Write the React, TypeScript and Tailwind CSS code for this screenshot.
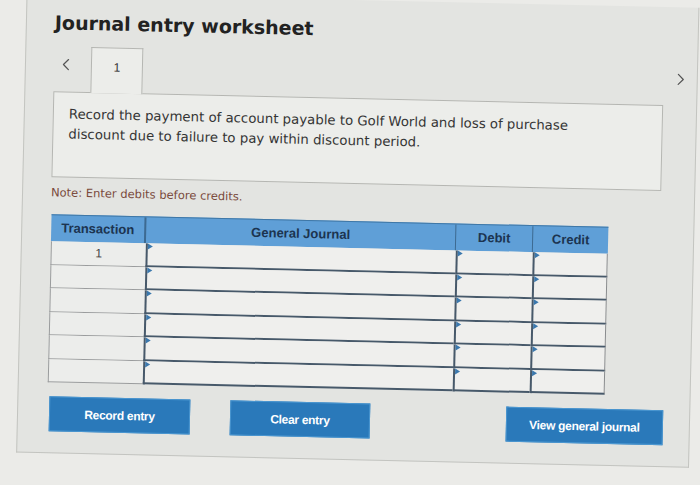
import { ChevronLeft, ChevronRight } from "lucide-react";

const rows = [0, 1, 2, 3, 4, 5];

function Marker() {
    return (
        <span className="absolute left-0 top-0 w-0 h-0 border-y-[3px] border-y-transparent border-l-[5px] border-l-[#3b78ad]" />
    );
}

export default function App() {
    return (
        <div className="w-[700px] h-[485px] overflow-hidden bg-[#ebebe8]">
            {/* photo is slightly tilted */}
            <div className="w-[700px] h-[485px] rotate-[1.3deg]">
                <div className="ml-[21px] w-[673px] h-[460px] border-x border-b border-[#c3c4c0] bg-[#e3e4e1] pl-[28px] pr-[6px] flex flex-col">
                    {/* Title */}
                    <h1 className="mt-[17px] text-[19px] leading-[24px] font-bold text-[#222] font-['DejaVu_Sans',sans-serif]">
                        Journal entry worksheet
                    </h1>

                    {/* Tabs row */}
                    <div className="mt-[12px] flex items-start h-[45px]">
                        <div className="w-[37px] pt-[8px] pl-[2px]">
                            <ChevronLeft className="w-5 h-5 text-[#555]" strokeWidth={1.5} />
                        </div>
                        <div className="relative z-10 w-[52px] h-[46px] border border-b-0 border-[#b5b6b2] bg-[#ecedea] flex justify-center pt-[11px] text-[12px] leading-[16px] text-[#333] font-['Liberation_Sans',sans-serif]">
                            1
                        </div>
                        <div className="flex-1" />
                        <div className="pt-[9px]">
                            <ChevronRight className="w-5 h-5 text-[#555]" strokeWidth={1.5} />
                        </div>
                    </div>

                    {/* Question box */}
                    <div className="w-[610px] h-[86px] border border-[#b5b6b2] bg-[#ecedea] pl-[15px] pr-[40px] pt-[12px] text-[13.3px] leading-[20px] text-[#353535] font-['DejaVu_Sans',sans-serif]">
                        Record the payment of account payable to Golf World and loss of purchase discount due to failure to pay within discount period.
                    </div>

                    <p className="mt-[8px] text-[11.5px] leading-[14px] text-[#7a4a3c] font-['DejaVu_Sans',sans-serif]">
                        Note: Enter debits before credits.
                    </p>

                    {/* Journal table */}
                    <div className="mt-[15px] w-[557px] ml-[1px] font-['Liberation_Sans',sans-serif]">
                        <div className="grid grid-cols-[95px_310px_77px_75px] h-[27px] bg-[#5f9fd7] border-t border-[#3f77a6] text-[13px] font-bold text-[#1c3450]">
                            <div className="flex items-center justify-center border-r-2 border-[#3d6a91]">Transaction</div>
                            <div className="flex items-center justify-center border-r border-[#3d6a91]">General Journal</div>
                            <div className="flex items-center justify-center border-r border-[#3d6a91]">Debit</div>
                            <div className="flex items-center justify-center">Credit</div>
                        </div>
                        {rows.map((r) => (
                            <div key={r} className="grid grid-cols-[95px_310px_77px_75px] h-[23.5px]">
                                <div className="flex items-center justify-center bg-[#ecedeb] border-l border-b border-[#9a9c9d] text-[12px] text-[#444]">
                                    {r === 0 ? "1" : ""}
                                </div>
                                <div className="relative bg-[#efefed] border-l-2 border-b-2 border-[#47596a]">
                                    <Marker />
                                </div>
                                <div className="relative bg-[#efefed] border-l-2 border-b-2 border-[#47596a]">
                                    <Marker />
                                </div>
                                <div className="relative bg-[#efefed] border-l-2 border-b-2 border-r border-[#47596a] border-r-[#8a8c8e]">
                                    <Marker />
                                </div>
                            </div>
                        ))}
                    </div>

                    {/* Buttons */}
                    <div className="mt-[14px] flex items-start font-['Liberation_Sans',sans-serif] text-[12px] font-bold text-white tracking-[-0.3px]">
                        <button className="ml-[3px] w-[141px] h-[35px] bg-[#2a79ba] border border-[#4a96d0]">
                            Record entry
                        </button>
                        <button className="ml-[40px] w-[140px] h-[35px] bg-[#2a79ba] border border-[#4a96d0]">
                            Clear entry
                        </button>
                        <button className="ml-[136px] w-[157px] h-[35px] bg-[#2a79ba] border border-[#4a96d0]">
                            View general journal
                        </button>
                    </div>
                </div>
            </div>
        </div>
    );
}
